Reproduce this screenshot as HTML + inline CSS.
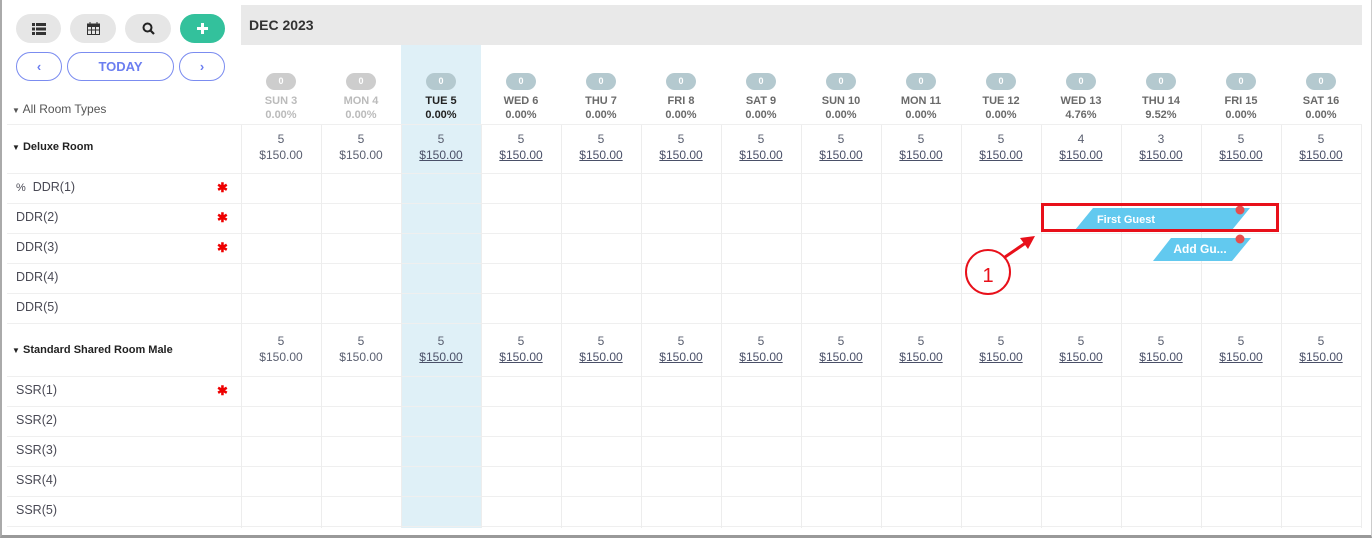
<!DOCTYPE html>
<html><head><meta charset="utf-8"><style>
*{box-sizing:border-box;margin:0;padding:0}
body{width:1372px;height:538px;background:#fff;font-family:"Liberation Sans",sans-serif;position:relative;overflow:hidden;color:#444}
.a{position:absolute}
.btn{position:absolute;top:14px;height:29px;border-radius:15px;background:#e6e6e6;display:flex;align-items:center;justify-content:center}
.nb{position:absolute;top:52px;height:29px;border:1.5px solid #7b8cf0;border-radius:15px;color:#6b7ef0;font-size:13px;font-weight:bold;display:flex;align-items:center;justify-content:center}
.hd{position:absolute;top:45px;left:241px;display:flex}
.hc{width:80px;height:80px;text-align:center;position:relative;font-weight:bold;font-size:11px;color:#6a6a6a}
.hc .bd{position:absolute;left:25px;top:28px;width:30px;height:17px;border-radius:9px;background:#b4c9cf;color:#fff;font-size:9px;line-height:17px}
.hc .dn{position:absolute;top:50px;width:80px;line-height:13px}
.hc .pc{position:absolute;top:64px;width:80px;line-height:13px}
.g .bd{background:#cdcdcd}.g{color:#bbb}
.rw{position:absolute;left:241px;display:flex}
.rc{width:80px;text-align:center;font-size:12px;color:#5a5f70;line-height:16px;padding-top:7px}
.rc u{color:#4a5068}
.hl{position:absolute;left:7px;width:1355px;height:1px;background:#efefef}
.vl{position:absolute;top:125px;height:403px;width:1px;background:#ededed}
.rn{position:absolute;left:16px;font-size:12.5px;color:#4a4a55}
.st{position:absolute;left:217px;color:#e00;font-size:13px;font-weight:bold}
.tp{position:absolute;left:12px;font-size:11px;font-weight:bold;color:#222}
</style></head><body>
<div class="a" style="left:0;top:0;width:1372px;height:538px;border-left:2px solid #aaa;border-bottom:3px solid #999;border-right:1px solid #ccc"></div>
<div class="a" style="left:241px;top:5px;width:1121px;height:40px;background:#e9e9e9"></div>
<div class="a" style="left:249px;top:17px;font-size:14px;font-weight:bold;color:#333">DEC 2023</div>
<div class="a" style="left:401px;top:45px;width:80px;height:483px;background:#dff0f7"></div>

<div class="btn" style="left:16px;width:45px"><svg width="14" height="12" viewBox="0 0 14 12"><rect x="0" y="0" width="3" height="3" fill="#333"/><rect x="4" y="0" width="10" height="3" fill="#333"/><rect x="0" y="4.5" width="3" height="3" fill="#333"/><rect x="4" y="4.5" width="10" height="3" fill="#333"/><rect x="0" y="9" width="3" height="3" fill="#333"/><rect x="4" y="9" width="10" height="3" fill="#333"/></svg></div>
<div class="btn" style="left:70px;width:46px"><svg width="13" height="13" viewBox="0 0 13 13"><rect x="0.5" y="2" width="12" height="10.5" fill="none" stroke="#333"/><rect x="0.5" y="2" width="12" height="3" fill="#333"/><path d="M3 0v3M10 0v3M1 8h11M4.5 5v7M8.5 5v7" stroke="#333"/></svg></div>
<div class="btn" style="left:125px;width:46px"><svg width="13" height="13" viewBox="0 0 13 13"><circle cx="5.5" cy="5.5" r="4" fill="none" stroke="#222" stroke-width="2"/><path d="M8.5 8.5l3.5 3.5" stroke="#222" stroke-width="2.2"/></svg></div>
<div class="btn" style="left:180px;width:45px;background:#33c19c"><svg width="11" height="11"><path d="M5.5 0v11M0 5.5h11" stroke="#fff" stroke-width="3"/></svg></div>
<div class="nb" style="left:16px;width:46px">‹</div>
<div class="nb" style="left:67px;width:107px">TODAY</div>
<div class="nb" style="left:179px;width:46px">›</div>
<div class="a" style="left:12px;top:102px;font-size:12px;color:#555"><span style="font-size:8px">▼</span> All Room Types</div>

<div class="hd">
<div class="hc g"><div class="bd">0</div><div class="dn">SUN 3</div><div class="pc">0.00%</div></div>
<div class="hc g"><div class="bd">0</div><div class="dn">MON 4</div><div class="pc">0.00%</div></div>
<div class="hc" style="color:#222"><div class="bd">0</div><div class="dn">TUE 5</div><div class="pc">0.00%</div></div>
<div class="hc"><div class="bd">0</div><div class="dn">WED 6</div><div class="pc">0.00%</div></div>
<div class="hc"><div class="bd">0</div><div class="dn">THU 7</div><div class="pc">0.00%</div></div>
<div class="hc"><div class="bd">0</div><div class="dn">FRI 8</div><div class="pc">0.00%</div></div>
<div class="hc"><div class="bd">0</div><div class="dn">SAT 9</div><div class="pc">0.00%</div></div>
<div class="hc"><div class="bd">0</div><div class="dn">SUN 10</div><div class="pc">0.00%</div></div>
<div class="hc"><div class="bd">0</div><div class="dn">MON 11</div><div class="pc">0.00%</div></div>
<div class="hc"><div class="bd">0</div><div class="dn">TUE 12</div><div class="pc">0.00%</div></div>
<div class="hc"><div class="bd">0</div><div class="dn">WED 13</div><div class="pc">4.76%</div></div>
<div class="hc"><div class="bd">0</div><div class="dn">THU 14</div><div class="pc">9.52%</div></div>
<div class="hc"><div class="bd">0</div><div class="dn">FRI 15</div><div class="pc">0.00%</div></div>
<div class="hc"><div class="bd">0</div><div class="dn">SAT 16</div><div class="pc">0.00%</div></div>
</div>

<div class="hl" style="top:124px"></div>
<div class="hl" style="top:173px"></div><div class="hl" style="top:203px"></div><div class="hl" style="top:233px"></div><div class="hl" style="top:263px"></div><div class="hl" style="top:293px"></div><div class="hl" style="top:323px"></div>
<div class="hl" style="top:376px"></div><div class="hl" style="top:406px"></div><div class="hl" style="top:436px"></div><div class="hl" style="top:466px"></div><div class="hl" style="top:496px"></div><div class="hl" style="top:526px"></div>
<div class="vl" style="left:241px"></div><div class="vl" style="left:321px"></div><div class="vl" style="left:401px"></div><div class="vl" style="left:481px"></div><div class="vl" style="left:561px"></div><div class="vl" style="left:641px"></div><div class="vl" style="left:721px"></div><div class="vl" style="left:801px"></div><div class="vl" style="left:881px"></div><div class="vl" style="left:961px"></div><div class="vl" style="left:1041px"></div><div class="vl" style="left:1121px"></div><div class="vl" style="left:1201px"></div><div class="vl" style="left:1281px"></div><div class="vl" style="left:1361px"></div>

<div class="rw" style="top:124px">
<div class="rc">5<br>$150.00</div><div class="rc">5<br>$150.00</div><div class="rc">5<br><u>$150.00</u></div><div class="rc">5<br><u>$150.00</u></div><div class="rc">5<br><u>$150.00</u></div><div class="rc">5<br><u>$150.00</u></div><div class="rc">5<br><u>$150.00</u></div><div class="rc">5<br><u>$150.00</u></div><div class="rc">5<br><u>$150.00</u></div><div class="rc">5<br><u>$150.00</u></div><div class="rc">4<br><u>$150.00</u></div><div class="rc">3<br><u>$150.00</u></div><div class="rc">5<br><u>$150.00</u></div><div class="rc">5<br><u>$150.00</u></div>
</div>
<div class="rw" style="top:326px">
<div class="rc">5<br>$150.00</div><div class="rc">5<br>$150.00</div><div class="rc">5<br><u>$150.00</u></div><div class="rc">5<br><u>$150.00</u></div><div class="rc">5<br><u>$150.00</u></div><div class="rc">5<br><u>$150.00</u></div><div class="rc">5<br><u>$150.00</u></div><div class="rc">5<br><u>$150.00</u></div><div class="rc">5<br><u>$150.00</u></div><div class="rc">5<br><u>$150.00</u></div><div class="rc">5<br><u>$150.00</u></div><div class="rc">5<br><u>$150.00</u></div><div class="rc">5<br><u>$150.00</u></div><div class="rc">5<br><u>$150.00</u></div>
</div>

<div class="tp" style="top:141px"><span style="font-size:8px">▼</span> Deluxe Room</div>
<div class="rn" style="top:180px"><span style="font-size:11px">%</span>&nbsp; DDR(1)</div>
<div class="rn" style="top:210px">DDR(2)</div><div class="rn" style="top:240px">DDR(3)</div><div class="rn" style="top:270px">DDR(4)</div><div class="rn" style="top:300px">DDR(5)</div>
<div class="st" style="top:180px">✱</div><div class="st" style="top:210px">✱</div><div class="st" style="top:240px">✱</div>
<div class="tp" style="top:344px"><span style="font-size:8px">▼</span> Standard Shared Room Male</div>
<div class="rn" style="top:383px">SSR(1)</div><div class="rn" style="top:413px">SSR(2)</div><div class="rn" style="top:443px">SSR(3)</div><div class="rn" style="top:473px">SSR(4)</div><div class="rn" style="top:503px">SSR(5)</div>
<div class="st" style="top:383px">✱</div>

<svg class="a" style="left:0;top:0" width="1372" height="538">
<polygon points="1093,208 1250,208 1232,230 1075,230" fill="#62c9ef"/>
<text x="1126" y="223" font-family="Liberation Sans" font-size="11" font-weight="bold" fill="#fff" text-anchor="middle">First Guest</text>
<circle cx="1240" cy="210" r="4.5" fill="#e84c4c"/>
<polygon points="1171,238 1251,238 1232,261 1153,261" fill="#62c9ef"/>
<text x="1200" y="253" font-family="Liberation Sans" font-size="12" font-weight="bold" fill="#fff" text-anchor="middle">Add Gu...</text>
<circle cx="1240" cy="239" r="4.5" fill="#e84c4c"/>
<rect x="1042.5" y="204.5" width="235" height="26" fill="none" stroke="#e8101a" stroke-width="3"/>
<circle cx="988" cy="272" r="22" fill="#fff" stroke="#e8101a" stroke-width="2"/>
<text x="988" y="282" font-family="Liberation Sans" font-size="20" fill="#e8101a" text-anchor="middle">1</text>
<path d="M1005 257 L1027 242" stroke="#e8101a" stroke-width="3"/>
<polygon points="1035,236 1020,238 1028,249" fill="#e8101a"/>
</svg>
</body></html>
